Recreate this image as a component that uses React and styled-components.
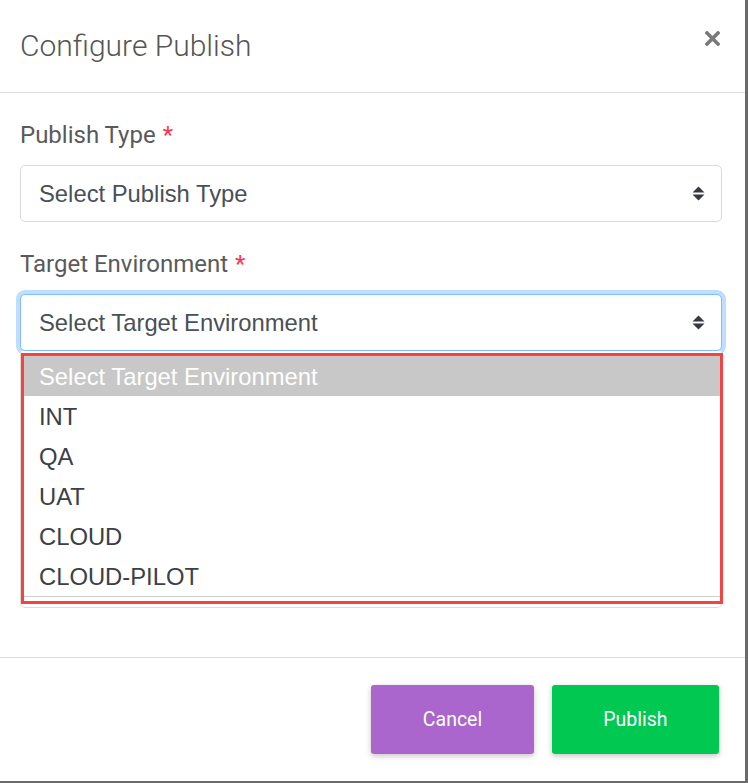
import React, { useState } from "react";
import styled, { createGlobalStyle } from "styled-components";

const GlobalStyle = createGlobalStyle`
  html, body { margin: 0; padding: 0; background: #fff; }
  * { box-sizing: border-box; }
`;

const Frame = styled.div`
  width: 748px;
  height: 783px;
  display: flex;
  flex-direction: column;
  background: #fff;
  border-right: 3px solid #6b6b6b;
  border-bottom: 2px solid #6b6b6b;
  font-family: Roboto, "Liberation Sans", sans-serif;
`;

const Header = styled.div`
  display: flex;
  align-items: center;
  justify-content: space-between;
  padding: 24px 25px 24px 20px;
  border-bottom: 1px solid #dedede;
`;

const Title = styled.h4`
  margin: 0;
  font-family: Roboto, sans-serif;
  font-weight: 300;
  font-size: 30px;
  line-height: 43.5px;
  color: #555;
`;

const CloseBtn = styled.button`
  width: 15px;
  height: 15px;
  padding: 0;
  border: 0;
  background: transparent;
  color: #7a7a7a;
  cursor: pointer;
  display: flex;
  margin-top: -14px;
  svg { display: block; }
`;

const Body = styled.div`
  flex: 1;
  padding: 25px 23px 0 20px;
`;

const Group = styled.div`
  margin-bottom: 25px;
`;

const Label = styled.label`
  display: block;
  font-family: Roboto, sans-serif;
  font-size: 24px;
  line-height: 35px;
  color: #5a5a5a;
  margin-bottom: 12px;
`;

const Required = styled.span`
  color: #ff3547;
  margin-left: 7px;
`;

const SelectWrap = styled.div`
  position: relative;
`;

const SelectBox = styled.div`
  height: 57px;
  display: flex;
  align-items: center;
  justify-content: space-between;
  padding: 1px 16px 0 18px;
  border: 1px solid ${(p) => (p.$focused ? "#80bdff" : "#dadada")};
  border-radius: 5px;
  background: #fff;
  box-shadow: ${(p) => (p.$focused ? "0 0 0 4px rgba(0, 123, 255, 0.25)" : "none")};
  font-family: "Liberation Sans", Arial, sans-serif;
  font-size: 23.8px;
  color: #495057;
  cursor: pointer;
`;

const Popup = styled.div`
  position: absolute;
  top: 100%;
  left: 0;
  right: 0;
  z-index: 5;
  padding: 2px 0 3px 0;
  background: #fff;
  border: 1px solid #dcdcdc;
  border-top: 0;
  border-radius: 0 0 5px 5px;
`;

const Outline = styled.div`
  margin-right: -2px;
  padding-bottom: 4px;
  border: 3px solid #f44343;
`;

const OptionList = styled.ul`
  list-style: none;
  margin: 0;
  padding: 0;
  border-bottom: 1px solid #cdcdcd;
`;

const Option = styled.li`
  height: 40px;
  line-height: 41px;
  padding-left: 15px;
  font-family: "Liberation Sans", Arial, sans-serif;
  font-size: 23.8px;
  color: ${(p) => (p.$active ? "#fff" : "#3b4046")};
  background: ${(p) => (p.$active ? "#c8c8c8" : "#fff")};
  cursor: default;
`;

const Footer = styled.div`
  display: flex;
  justify-content: flex-end;
  gap: 18px;
  padding: 27px 26px 27px 20px;
  border-top: 1px solid #dedede;
`;

const Button = styled.button`
  height: 69px;
  padding: 0 51.5px;
  border: 0;
  border-radius: 3px;
  background: ${(p) => p.$bg};
  color: #fff;
  font-family: Roboto, sans-serif;
  font-size: 19.5px;
  box-shadow: 0 2px 5px rgba(0, 0, 0, 0.16), 0 2px 8px rgba(0, 0, 0, 0.08);
  cursor: pointer;
`;

const Arrows = () => (
  <svg width="13" height="15" viewBox="0 0 13 15">
    <path d="M6.5 0.5 L12.5 6.5 L0.5 6.5 Z" fill="#343a40" />
    <path d="M0.5 8.5 L12.5 8.5 L6.5 14.5 Z" fill="#343a40" />
  </svg>
);

const CloseIcon = () => (
  <svg width="15" height="15" viewBox="0 0 15 15">
    <path d="M2 2 L13 13 M13 2 L2 13" stroke="currentColor" strokeWidth="3.6" strokeLinecap="square" />
  </svg>
);

const environments = ["INT", "QA", "UAT", "CLOUD", "CLOUD-PILOT"];

export default function App() {
  const [open] = useState(true);

  return (
    <>
      <GlobalStyle />
      <Frame>
        <Header>
          <Title>Configure Publish</Title>
          <CloseBtn aria-label="Close">
            <CloseIcon />
          </CloseBtn>
        </Header>

        <Body>
          <Group>
            <Label>
              Publish Type<Required>*</Required>
            </Label>
            <SelectWrap>
              <SelectBox>
                <span>Select Publish Type</span>
                <Arrows />
              </SelectBox>
            </SelectWrap>
          </Group>

          <Group>
            <Label>
              Target Environment<Required>*</Required>
            </Label>
            <SelectWrap>
              <SelectBox $focused>
                <span>Select Target Environment</span>
                <Arrows />
              </SelectBox>
              {open && (
                <Popup>
                  <Outline>
                    <OptionList>
                      <Option $active>Select Target Environment</Option>
                      {environments.map((env) => (
                        <Option key={env}>{env}</Option>
                      ))}
                    </OptionList>
                  </Outline>
                </Popup>
              )}
            </SelectWrap>
          </Group>
        </Body>

        <Footer>
          <Button $bg="#aa66cc">Cancel</Button>
          <Button $bg="#00c851">Publish</Button>
        </Footer>
      </Frame>
    </>
  );
}
